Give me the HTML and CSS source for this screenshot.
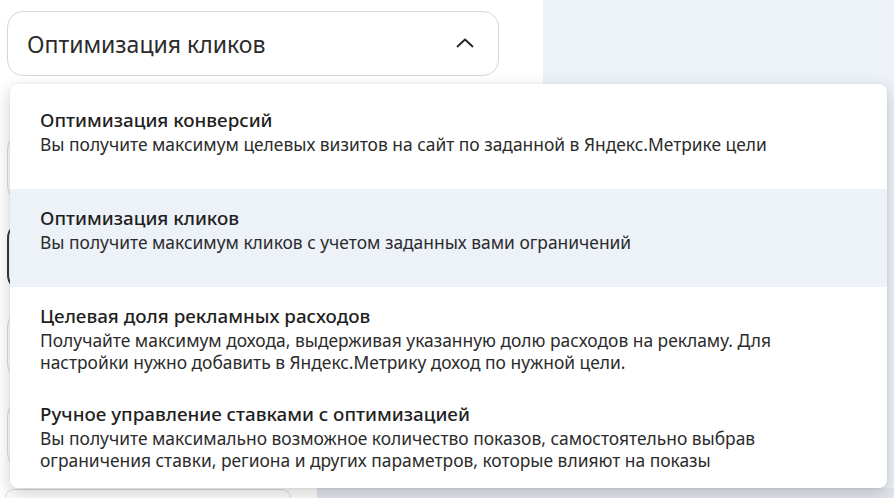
FILE: index.html
```html
<!DOCTYPE html>
<html lang="ru">
<head>
    <meta charset="UTF-8">
    <meta name="viewport" content="width=device-width, initial-scale=1.0">
    <title>Стратегия</title>
    <link rel="stylesheet" href="styles.css">
</head>
<body>
    <div class="page">
        <div class="form">
            <div class="select-wrap">
                <div class="select">
                    <span class="select-value">Оптимизация кликов</span>
                    <svg class="chevron" width="18" height="10" viewBox="0 0 18 10">
                        <path d="M1.5 8.5 L9 1.5 L16.5 8.5" fill="none" stroke="#222" stroke-width="1.8" stroke-linecap="round" stroke-linejoin="round"/>
                    </svg>
                </div>
                <div class="menu">
                    <div class="option">
                        <div class="option-title">Оптимизация конверсий</div>
                        <div class="option-text">Вы получите максимум целевых визитов на сайт по заданной в Яндекс.Метрике цели</div>
                    </div>
                    <div class="option active">
                        <div class="option-title">Оптимизация кликов</div>
                        <div class="option-text">Вы получите максимум кликов с учетом заданных вами ограничений</div>
                    </div>
                    <div class="option">
                        <div class="option-title">Целевая доля рекламных расходов</div>
                        <div class="option-text">Получайте максимум дохода, выдерживая указанную долю расходов на рекламу. Для настройки нужно добавить в Яндекс.Метрику доход по нужной цели.</div>
                    </div>
                    <div class="option">
                        <div class="option-title">Ручное управление ставками с оптимизацией</div>
                        <div class="option-text">Вы получите максимально возможное количество показов, самостоятельно выбрав ограничения ставки, региона и других параметров, которые влияют на показы</div>
                    </div>
                </div>
            </div>
            <div class="field first"></div>
            <div class="field focused"></div>
            <div class="field"></div>
            <div class="field"></div>
            <div class="field small"></div>
        </div>
        <div class="side"></div>
    </div>
    <div class="footer-panel"></div>
</body>
</html>
```

FILE: styles.css
```css
* {
    margin: 0;
    padding: 0;
    box-sizing: border-box;
    font-family: 'Noto Sans', 'Open Sans', sans-serif;
}
body {
    background: #fff;
    width: 894px;
    height: 498px;
    overflow: hidden;
    position: relative;
}
.page {
    display: flex;
    height: 498px;
    overflow: hidden;
}
.form {
    width: 543px;
    height: 498px;
    padding: 11px 0 0 7px;
    display: flex;
    flex-direction: column;
    gap: 20px;
}
.side {
    flex: 1;
    background: #edf1f8;
}
.select-wrap {
    position: relative;
}
.select {
    width: 492px;
    height: 65px;
    border: 1px solid #d3d7de;
    border-radius: 16px;
    display: flex;
    align-items: center;
    justify-content: space-between;
    padding: 0 24px 0 19px;
    background: #fff;
    flex-shrink: 0;
}
.select-value {
    font-size: 23px;
    color: #2b2b2b;
}
.chevron {
    margin-top: -2px;
}
.field {
    width: 492px;
    height: 69px;
    border: 1px solid #d9dce2;
    border-radius: 16px;
    flex-shrink: 0;
}
.field.first {
    margin-top: 37px;
}
.field.focused {
    border: 2px solid #3a3a3f;
}
.field.small {
    width: 286px;
    height: 9px;
    margin-left: -2px;
    border-bottom: none;
    border-radius: 16px 16px 0 0;
}
.footer-panel {
    position: absolute;
    left: 317px;
    right: 0;
    top: 488px;
    height: 10px;
    background: #e3e7ee;
}
.menu {
    position: absolute;
    top: 73px;
    left: 3px;
    width: 877px;
    background: #fff;
    border-radius: 8px;
    padding: 7px 0 5px;
    box-shadow: 0 6px 18px rgba(0,0,0,0.18), 0 0 3px rgba(0,0,0,0.08);
    z-index: 10;
}
.option {
    min-height: 98px;
    padding: 16px 30px 12px;
}
.option.active {
    background: #edf1f8;
}
.option-title {
    font-size: 18.8px;
    font-weight: 500;
    line-height: 26px;
    color: #1f1f1f;
}
.option-text {
    font-size: 17.4px;
    line-height: 22px;
    color: #2b2b2b;
}
```
